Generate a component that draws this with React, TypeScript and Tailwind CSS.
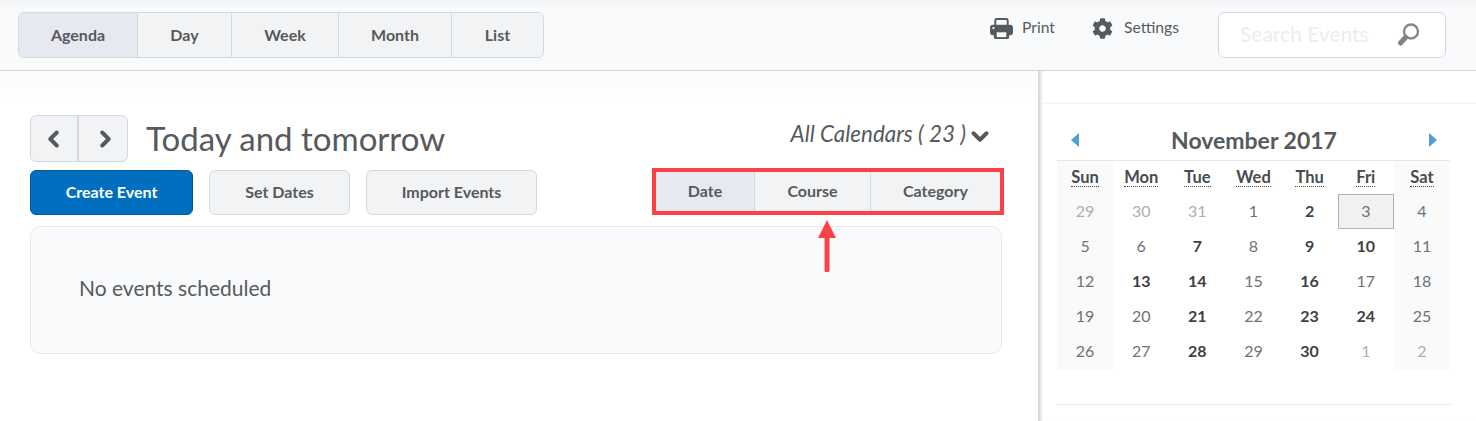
import { FaCog } from 'react-icons/fa';

const VIEWS = [
  { label: 'Agenda', w: 'w-[118px]', active: true },
  { label: 'Day', w: 'w-[94px]' },
  { label: 'Week', w: 'w-[107px]' },
  { label: 'Month', w: 'w-[113px]' },
  { label: 'List', w: 'w-[92px]' },
];

const SORTS = [
  { label: 'Date', w: 'w-[98px]', active: true },
  { label: 'Course', w: 'w-[116px]' },
  { label: 'Category', w: 'w-[130px]' },
];

const WEEKDAYS = ['Sun', 'Mon', 'Tue', 'Wed', 'Thu', 'Fri', 'Sat'];

// n = day number, k = kind: m muted, b has events (bold), s selected
const WEEKS: { n: number; k?: string }[][] = [
  [{ n: 29, k: 'm' }, { n: 30, k: 'm' }, { n: 31, k: 'm' }, { n: 1 }, { n: 2, k: 'b' }, { n: 3, k: 's' }, { n: 4 }],
  [{ n: 5 }, { n: 6 }, { n: 7, k: 'b' }, { n: 8 }, { n: 9, k: 'b' }, { n: 10, k: 'b' }, { n: 11 }],
  [{ n: 12 }, { n: 13, k: 'b' }, { n: 14, k: 'b' }, { n: 15 }, { n: 16, k: 'b' }, { n: 17 }, { n: 18 }],
  [{ n: 19 }, { n: 20 }, { n: 21, k: 'b' }, { n: 22 }, { n: 23, k: 'b' }, { n: 24, k: 'b' }, { n: 25 }],
  [{ n: 26 }, { n: 27 }, { n: 28, k: 'b' }, { n: 29 }, { n: 30, k: 'b' }, { n: 1, k: 'm' }, { n: 2, k: 'm' }],
];

function Chevron({ dir }: { dir: 'left' | 'right' | 'down' }) {
  const points = dir === 'left' ? '9,2 3,8 9,14' : dir === 'right' ? '3,2 9,8 3,14' : '2,3 8,9 14,3';
  const box = dir === 'down' ? '0 0 16 12' : '0 0 12 16';
  return (
    <svg viewBox={box} className={dir === 'down' ? 'w-[18px] h-[13px]' : 'w-[13px] h-[18px]'}>
      <polyline points={points} fill="none" stroke="#565a5c" strokeWidth="3.6" strokeLinecap="round" strokeLinejoin="round" />
    </svg>
  );
}

function PrintIcon() {
  return (
    <svg viewBox="0 0 24 22" className="w-[23px] h-[21px]">
      <rect x="5.5" y="1" width="13" height="9" rx="1.5" fill="#fff" stroke="#565a5c" strokeWidth="2" />
      <rect x="0" y="7" width="24" height="11" rx="3" fill="#565a5c" />
      <rect x="4" y="12" width="16" height="10" rx="1.5" fill="#565a5c" />
      <rect x="7" y="15" width="10" height="5" fill="#fff" />
      <circle cx="3.5" cy="10.5" r="1.2" fill="#fff" />
    </svg>
  );
}

function dayClass(k?: string) {
  if (k === 'm') return 'text-[#b1aeae]';
  if (k === 'b') return 'font-bold text-[#3f4143]';
  return 'text-[#6f7274]';
}

export default function App() {
  return (
    <div className="w-[1476px] h-[421px] overflow-hidden bg-white text-[#565a5c]" style={{ fontFamily: 'Lato, sans-serif' }}>
      <div className="h-[5px] bg-[#f3f5f7]" />

      {/* Toolbar */}
      <div className="h-[66px] bg-[#f9fafb] border-b border-[#d3d5d9] flex items-start pl-[18px] pr-[30px] pt-[7px]">
        <div className="flex h-[46px] rounded-md border border-[#d3d9e3] overflow-hidden">
          {VIEWS.map((v, i) => (
            <div
              key={v.label}
              className={`${v.w} flex items-center justify-center text-[16px] font-bold ${i > 0 ? 'border-l border-[#d3d9e3]' : ''} ${v.active ? 'bg-[#e6e9f0]' : 'bg-[#f2f3f5]'}`}
            >
              {v.label}
            </div>
          ))}
        </div>
        <div className="ml-auto flex items-start">
          <div className="flex items-center gap-[9px] mt-[2px] h-[28px]">
            <PrintIcon />
            <span className="text-[15.7px]">Print</span>
          </div>
          <div className="flex items-center gap-[11px] ml-[37px] mt-[2px] h-[28px]">
            <FaCog className="w-[21px] h-[21px] text-[#565a5c]" />
            <span className="text-[15.7px]">Settings</span>
          </div>
          <div className="w-[228px] h-[46px] ml-[39px] rounded-md border border-[#d3d9e3] bg-white flex items-center pl-[21px] pr-[22px]">
            <span className="text-[21px] -mt-[2px] text-[#eaedf2]">Search Events</span>
            <svg viewBox="0 0 26 26" className="ml-auto w-[26px] h-[26px]">
              <circle cx="14" cy="9.5" r="7" fill="none" stroke="#85888a" strokeWidth="2.4" />
              <line x1="8.5" y1="15.5" x2="3.5" y2="21" stroke="#808486" strokeWidth="5" strokeLinecap="round" />
            </svg>
          </div>
        </div>
      </div>

      <div className="flex h-[350px]">
        {/* Main column */}
        <div className="w-[1038px] pl-[30px] pr-[36px] pt-[44px] bg-gradient-to-b from-[#fbfbfc] to-white to-[30px]">
          <div className="flex items-center h-[47px]">
            <div className="flex h-[47px] rounded-md border border-[#d3d9e3] bg-[#f2f3f5] overflow-hidden">
              <div className="w-[48px] flex items-center justify-center border-r-2 border-[#d3d9e3] pr-[1px]">
                <Chevron dir="left" />
              </div>
              <div className="w-[48px] flex items-center justify-center pl-[4px]">
                <Chevron dir="right" />
              </div>
            </div>
            <h1 className="ml-[18px] text-[33px] leading-none font-normal text-[#565a5c]">Today and tomorrow</h1>
            <div className="ml-auto mr-[13px] -mt-[10px] flex items-center gap-[5px]">
              <span className="text-[22.4px] italic">All Calendars ( 23 )</span>
              <span className="mt-[6px] flex"><Chevron dir="down" /></span>
            </div>
          </div>

          <div className="flex items-end h-[47px] mt-[6px]">
            <button className="w-[163px] h-[45px] pb-[2px] rounded-md bg-[#006fbf] border border-[#005a9c] text-white text-[16px] font-bold">Create Event</button>
            <button className="w-[141px] h-[45px] pb-[2px] ml-[16px] rounded-md bg-[#f2f3f5] border border-[#d3d9e3] text-[16px] font-bold">Set Dates</button>
            <button className="w-[171px] h-[45px] pb-[2px] ml-[16px] rounded-md bg-[#f2f3f5] border border-[#d3d9e3] text-[16px] font-bold">Import Events</button>
            <div className="relative ml-auto -mr-[2px]">
              <div className="flex h-[47px] border-[4px] border-[#fb4245]">
                {SORTS.map((s, i) => (
                  <div
                    key={s.label}
                    className={`${s.w} pb-[2px] flex items-center justify-center text-[16px] font-bold ${i > 0 ? 'border-l border-[#d3d9e3]' : ''} ${s.active ? 'bg-[#e6e9f0]' : 'bg-[#f2f3f5]'}`}
                  >
                    {s.label}
                  </div>
                ))}
              </div>
              {/* annotation arrow */}
              <svg viewBox="0 0 18 52" className="absolute left-[166px] top-[52px] w-[18px] h-[52px] z-10">
                <polygon points="9,0 18,18 0,18" fill="#fb4245" />
                <line x1="9" y1="16" x2="9" y2="50" stroke="#fb4245" strokeWidth="5" strokeLinecap="round" />
              </svg>
            </div>
          </div>

          <div className="mt-[11px] h-[128px] rounded-[10px] border border-[#e6e9f0] bg-[#f9fafc] flex items-center pl-[48px]">
            <span className="text-[21px] -mt-[5px]">No events scheduled</span>
          </div>
        </div>

        {/* Side column */}
        <div className="flex-1 pl-[3px] shadow-[inset_5px_0_3px_-2px_rgba(0,0,0,0.16)]">
          <div className="h-[33px] border-b border-[#f1f2f4]" />
          <div className="pl-[16px] pr-[26px]">
            <div className="flex items-center h-[56px] pt-[16px] pl-[14px] pr-[13px]">
              <svg viewBox="0 0 8 14" className="w-[8px] h-[14px]"><polygon points="8,0 8,14 0,7" fill="#4a9fdc" /></svg>
              <div className="flex-1 text-center text-[23px] font-bold leading-none text-[#565a5c]">November 2017</div>
              <svg viewBox="0 0 8 14" className="w-[8px] h-[14px]"><polygon points="0,0 0,14 8,7" fill="#4a9fdc" /></svg>
            </div>
            <div className="border-t border-[#e6e7ea] grid grid-cols-7">
              {WEEKDAYS.map((d, i) => (
                <div key={d} className={`h-[33px] flex items-center justify-center ${i === 0 || i === 6 ? 'bg-[#fafafa]' : ''}`}>
                  <span className="text-[16.5px] leading-[18px] font-bold text-[#494c4e] border-b border-dotted border-[#3f4143]">{d}</span>
                </div>
              ))}
              {WEEKS.flatMap((week, w) =>
                week.map((day, i) => (
                  <div
                    key={`${w}-${i}`}
                    className={`h-[35.2px] pb-[2px] flex items-center justify-center text-[16px] ${i === 0 || i === 6 ? 'bg-[#fafafa]' : ''} ${day.k === 's' ? 'bg-[#f1f1f1] border border-[#b2b2aa] text-[#6f7274]' : dayClass(day.k)}`}
                  >
                    {day.n}
                  </div>
                ))
              )}
            </div>
            <div className="mt-[34px] -mx-px border-t border-[#e6e7ea]" />
          </div>
        </div>
      </div>
    </div>
  );
}
